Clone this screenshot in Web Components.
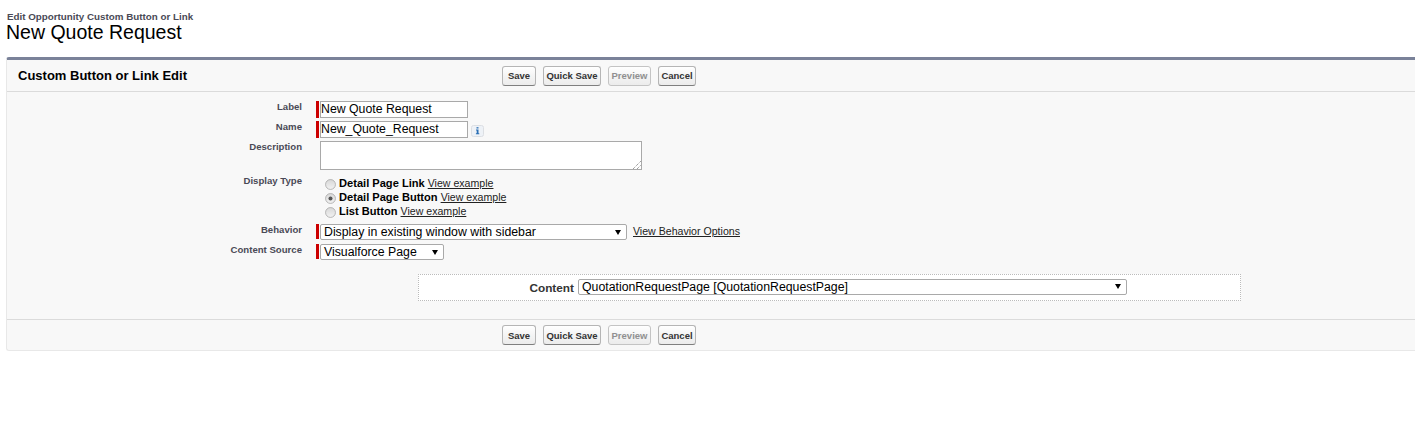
<!DOCTYPE html>
<html>
<head>
<meta charset="utf-8">
<title>New Quote Request</title>
<style>
    html, body { margin: 0; background: #fff; }
    body { font-family: "Liberation Sans", Arial, sans-serif; }
</style>
</head>
<body>
<page-title subtitle="Edit Opportunity Custom Button or Link">New Quote Request</page-title>
<edit-block heading="Custom Button or Link Edit">
    <form-row label="Label" height="20"><sf-input required width="148">New Quote Request</sf-input></form-row>
    <form-row label="Name" height="20"><sf-input required width="148">New_Quote_Request</sf-input><info-icon></info-icon></form-row>
    <form-row label="Description" height="34"><sf-textarea></sf-textarea></form-row>
    <form-row label="Display Type" height="49">
        <radio-list>
            <radio-item title-text="Detail Page Link"></radio-item>
            <radio-item title-text="Detail Page Button" checked></radio-item>
            <radio-item title-text="List Button"></radio-item>
        </radio-list>
    </form-row>
    <form-row label="Behavior" height="20">
        <sf-select required width="307">Display in existing window with sidebar</sf-select>
        <sf-link class="behavior">View Behavior Options</sf-link>
    </form-row>
    <form-row label="Content Source" height="20"><sf-select required width="124">Visualforce Page</sf-select></form-row>
    <content-box label="Content"><sf-select width="549" plain>QuotationRequestPage [QuotationRequestPage]</sf-select></content-box>
</edit-block>

<script>
class PageTitle extends HTMLElement {
    constructor() {
        super();
        this.attachShadow({ mode: 'open' });
        this.shadowRoot.innerHTML = `
            <style>
                :host { display: block; padding: 11px 0 0 7px; height: 57px; box-sizing: border-box; }
                .sub { font-size: 9.8px; font-weight: bold; color: #4a4a56; line-height: 12px; }
                .main { font-size: 19.5px; color: #000; line-height: 22px; margin: -2px 0 0 -1px; }
            </style>
            <div class="sub">${this.getAttribute('subtitle')}</div>
            <div class="main"><slot></slot></div>
        `;
    }
}

class SfButton extends HTMLElement {
    constructor() {
        super();
        this.attachShadow({ mode: 'open' });
        this.shadowRoot.innerHTML = `
            <style>
                :host {
                    display: flex; align-items: center; justify-content: center;
                    box-sizing: border-box; height: 20px; white-space: nowrap;
                    border: 1px solid #b5b5b5; border-bottom-color: #7f7f7f; border-radius: 3px;
                    background: linear-gradient(#fff, #f4f4f4 50%, #ececec);
                    font-size: 9.5px; font-weight: bold; color: #333;
                    cursor: pointer;
                }
                :host([disabled]) { color: #909090; border-color: #c4c4c4; cursor: default; }
            </style>
            <slot></slot>
        `;
    }
}

class ButtonBar extends HTMLElement {
    constructor() {
        super();
        this.attachShadow({ mode: 'open' });
        this.shadowRoot.innerHTML = `
            <style>
                :host { display: flex; gap: 7px; }
                sf-button:nth-of-type(1) { width: 34px; }
                sf-button:nth-of-type(2) { width: 58px; }
                sf-button:nth-of-type(3) { width: 43px; }
                sf-button:nth-of-type(4) { width: 38px; }
            </style>
            <sf-button>Save</sf-button>
            <sf-button>Quick Save</sf-button>
            <sf-button disabled>Preview</sf-button>
            <sf-button>Cancel</sf-button>
        `;
    }
}

class EditBlock extends HTMLElement {
    constructor() {
        super();
        this.attachShadow({ mode: 'open' });
        this.shadowRoot.innerHTML = `
            <style>
                :host {
                    display: block; margin-left: 6px; height: 294px; box-sizing: border-box;
                    background: #f8f8f8;
                    border: 1px solid #e8e8e8; border-top: 3px solid #7a8299; border-right: 0;
                    border-radius: 3px 0 0 3px;
                }
                .head {
                    display: flex; align-items: center; height: 32px; box-sizing: border-box;
                    border-bottom: 1px solid #dbdbdb; padding-left: 11px;
                }
                h2 { margin: 0; width: 484px; font-size: 13px; font-weight: bold; color: #000; }
                .body { height: 227px; box-sizing: border-box; padding-top: 9px; }
                .foot {
                    display: flex; align-items: center; height: 31px; box-sizing: border-box;
                    border-top: 1px solid #dbdbdb; padding-left: 495px;
                }
            </style>
            <div class="head"><h2>${this.getAttribute('heading')}</h2><button-bar></button-bar></div>
            <div class="body"><slot></slot></div>
            <div class="foot"><button-bar></button-bar></div>
        `;
    }
}

class FormRow extends HTMLElement {
    constructor() {
        super();
        this.attachShadow({ mode: 'open' });
        this.shadowRoot.innerHTML = `
            <style>
                :host { display: flex; height: ${this.getAttribute('height')}px; }
                .label {
                    width: 295px; flex: none; text-align: right; box-sizing: border-box;
                    font-size: 9.6px; font-weight: bold; color: #4a4a56;
                    line-height: 12px;
                }
                .field { margin-left: 14px; display: flex; align-items: flex-start; }
            </style>
            <div class="label">${this.getAttribute('label')}</div>
            <div class="field"><slot></slot></div>
        `;
    }
}

class SfInput extends HTMLElement {
    constructor() {
        super();
        this.attachShadow({ mode: 'open' });
        this.shadowRoot.innerHTML = `
            <style>
                :host { display: flex; height: 17px; }
                .bar { width: 3px; background: #c00; margin-right: 1px; }
                .box {
                    width: ${this.getAttribute('width')}px; box-sizing: border-box;
                    border: 1px solid #a9a9a9; background: #fff;
                    font-size: 12.3px; line-height: 15px; color: #000; white-space: nowrap;
                }
            </style>
            <div class="bar"></div>
            <div class="box"><slot></slot></div>
        `;
    }
}

class SfTextarea extends HTMLElement {
    constructor() {
        super();
        this.attachShadow({ mode: 'open' });
        this.shadowRoot.innerHTML = `
            <style>
                :host {
                    display: block; position: relative; width: 322px; height: 29px; box-sizing: border-box;
                    border: 1px solid #a9a9a9; background: #fff; margin-left: 4px;
                }
                svg { position: absolute; right: 0; bottom: 0; }
            </style>
            <svg width="8" height="8" viewBox="0 0 8 8">
                <path d="M0 8L8 0M4 8L8 4" stroke="#777" stroke-width="1" stroke-dasharray="1 1" fill="none"/>
            </svg>
        `;
    }
}

class SfSelect extends HTMLElement {
    constructor() {
        super();
        this.attachShadow({ mode: 'open' });
        const plain = this.hasAttribute('plain');
        this.shadowRoot.innerHTML = `
            <style>
                :host { display: flex; height: 16px; }
                :host([plain]) { margin-bottom: 2px; }
                .bar { width: 3px; background: #c00; margin-right: 1px; height: 15px; }
                .box {
                    width: ${this.getAttribute('width')}px; box-sizing: border-box;
                    border: 1px solid #a9a9a9; border-radius: 2px; background: #fff;
                    display: flex; align-items: center; justify-content: space-between;
                    font-size: 12.3px; color: #000; padding: 0 5px 0 3px; white-space: nowrap;
                }
                .arrow {
                    width: 0; height: 0;
                    border-left: 3px solid transparent; border-right: 3px solid transparent;
                    border-top: 5px solid #000;
                }
            </style>
            ${plain ? '' : '<div class="bar"></div>'}
            <div class="box"><span><slot></slot></span><span class="arrow"></span></div>
        `;
    }
}

class InfoIcon extends HTMLElement {
    constructor() {
        super();
        this.attachShadow({ mode: 'open' });
        this.shadowRoot.innerHTML = `
            <style>
                :host { display: block; margin: 4px 0 0 3px; width: 13px; height: 12px; }
                svg { display: block; }
            </style>
            <svg width="13" height="12" viewBox="0 0 13 12">
                <rect x="0.5" y="0.5" width="12" height="11" rx="2" fill="#eef2f7" stroke="#dcdfe3"/>
                <rect x="5.5" y="2" width="2" height="1.6" fill="#4f86c0"/>
                <path d="M5 4.5h2.5v3.8h0.8v1h-3.4v-1h0.8v-2.8h-0.7z" fill="#2a6fb5"/>
            </svg>
        `;
    }
}

class RadioList extends HTMLElement {
    constructor() {
        super();
        this.attachShadow({ mode: 'open' });
        this.shadowRoot.innerHTML = `
            <style>
                :host { display: block; padding: 1px 0 0 9px; }
            </style>
            <slot></slot>
        `;
    }
}

class RadioItem extends HTMLElement {
    constructor() {
        super();
        this.attachShadow({ mode: 'open' });
        const dot = this.hasAttribute('checked') ? '<circle cx="6" cy="6" r="2.2" fill="#555"/>' : '';
        this.shadowRoot.innerHTML = `
            <style>
                :host { display: flex; align-items: center; height: 14px; font-size: 11.1px; color: #000; white-space: nowrap; }
                svg { margin: 2px 3px 0 0; flex: none; }
                b { margin-right: 3px; }
            </style>
            <svg width="11" height="11" viewBox="0 0 12 12">
                <defs><linearGradient id="g" x1="0" y1="0" x2="0" y2="1"><stop offset="0" stop-color="#d8d8d8"/><stop offset="1" stop-color="#f2f2f2"/></linearGradient></defs>
                <circle cx="6" cy="6" r="5.4" fill="url(#g)" stroke="#aaa" stroke-width="0.9"/>
                ${dot}
            </svg>
            <b>${this.getAttribute('title-text')}</b>
            <sf-link>View example</sf-link>
        `;
    }
}

class SfLink extends HTMLElement {
    constructor() {
        super();
        this.attachShadow({ mode: 'open' });
        this.shadowRoot.innerHTML = `
            <style>
                :host { display: inline-block; font-size: 10.6px; color: #222; text-decoration: underline; cursor: pointer; }
                :host(.behavior) { margin: 1px 0 0 6px; }
            </style>
            <slot></slot>
        `;
    }
}

class ContentBox extends HTMLElement {
    constructor() {
        super();
        this.attachShadow({ mode: 'open' });
        this.shadowRoot.innerHTML = `
            <style>
                :host {
                    display: flex; align-items: center; box-sizing: border-box;
                    width: 823px; height: 27px; margin: 10px 0 0 411px;
                    background: #fff; border: 1px dotted #bbb;
                }
                .lbl { width: 159px; text-align: right; font-size: 11.8px; font-weight: bold; color: #333; padding-right: 4px; box-sizing: border-box; }
            </style>
            <div class="lbl">${this.getAttribute('label')}</div>
            <slot></slot>
        `;
    }
}

customElements.define('sf-link', SfLink);
customElements.define('page-title', PageTitle);
customElements.define('sf-button', SfButton);
customElements.define('button-bar', ButtonBar);
customElements.define('edit-block', EditBlock);
customElements.define('form-row', FormRow);
customElements.define('sf-input', SfInput);
customElements.define('sf-textarea', SfTextarea);
customElements.define('sf-select', SfSelect);
customElements.define('info-icon', InfoIcon);
customElements.define('radio-list', RadioList);
customElements.define('radio-item', RadioItem);
customElements.define('content-box', ContentBox);
</script>
</body>
</html>
